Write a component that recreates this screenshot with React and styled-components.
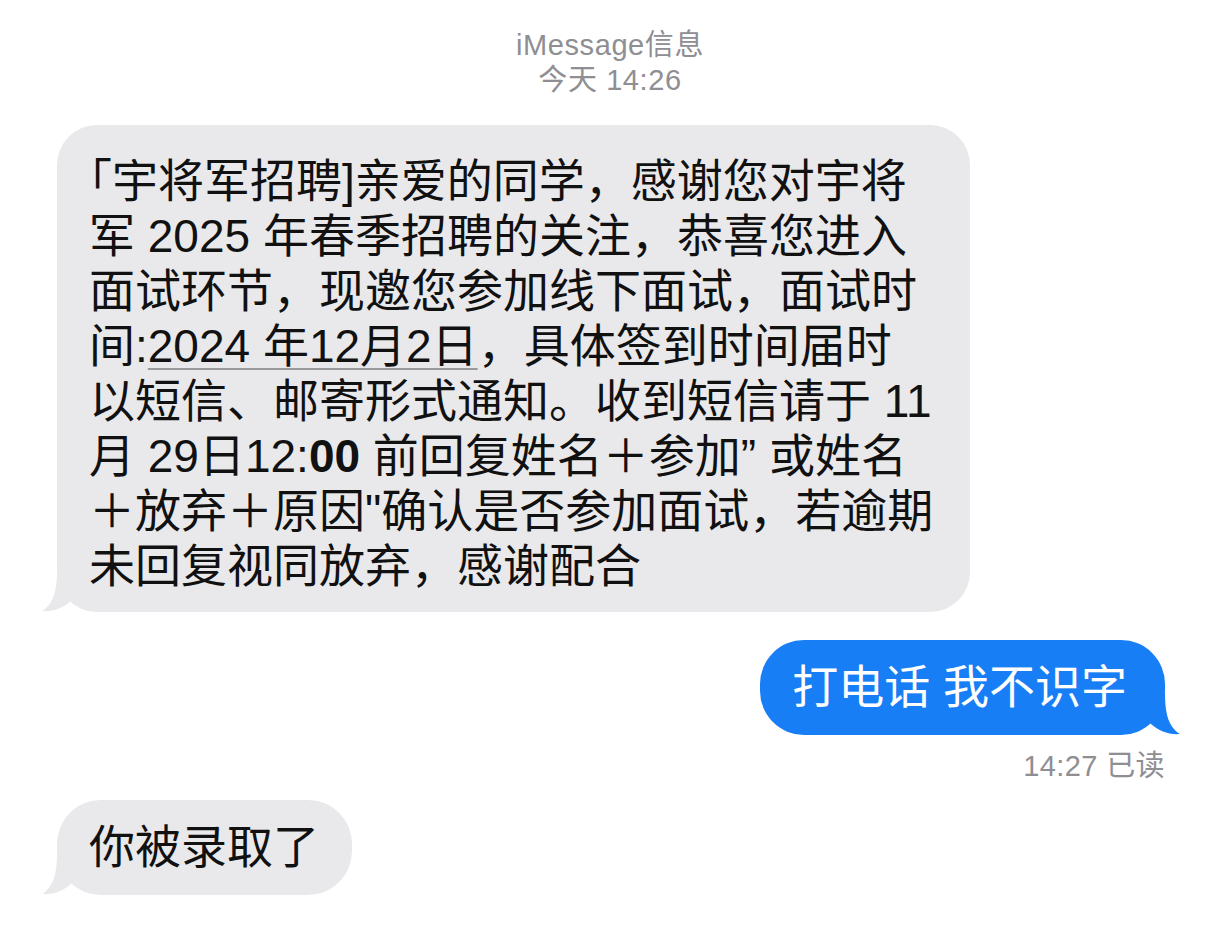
import React from 'react';
import styled, { createGlobalStyle } from 'styled-components';

const GlobalStyle = createGlobalStyle`
  body {
    margin: 0;
    background: #ffffff;
    font-family: "Liberation Sans", "Noto Sans CJK SC", sans-serif;
  }
`;

const Page = styled.div`
  display: flex;
  flex-direction: column;
  padding: 28px 51px 40px 57px;
`;

const Header = styled.div`
  align-self: center;
  text-align: center;
  color: #8e8e93;
  font-size: 29px;
  line-height: 35px;
  letter-spacing: 0.6px;
  margin-left: -2px;
`;

const Bubble = styled.div`
  position: relative;
  box-sizing: border-box;
  align-self: ${(p) => (p.$me ? 'flex-end' : 'flex-start')};
  background: ${(p) => (p.$me ? '#177ef5' : '#e9e9eb')};
  color: ${(p) => (p.$me ? '#ffffff' : '#111111')};
  border-radius: ${(p) => p.$radius || 44}px;
  font-size: 46px;
  line-height: 55px;
  margin-top: ${(p) => p.$top || 0}px;
  padding: ${(p) => p.$pad || '20px 33px 20px 32px'};
  width: ${(p) => (p.$width ? `${p.$width}px` : 'auto')};
`;

const Line = styled.span`
  display: block;
  white-space: nowrap;
`;

const Half = styled.span`
  font-family: "Noto Sans CJK SC", sans-serif;
  font-feature-settings: "halt";
`;

const Dated = styled.span`
  text-decoration: underline;
  text-decoration-color: #9a9a9e;
  text-decoration-thickness: 2px;
  text-underline-offset: 6px;
`;

const Heavy = styled.span`
  font-weight: 700;
`;

const Receipt = styled.div`
  align-self: flex-end;
  color: #8e8e93;
  font-size: 29px;
  line-height: 34px;
  letter-spacing: 0.4px;
  margin-top: 14px;
`;

const TailSvg = styled.svg`
  position: absolute;
  bottom: 0;
  width: 45px;
  height: 42px;
  ${(p) => (p.$me ? 'right: -16px; transform: scaleX(-1);' : 'left: -16px;')}
`;

function Tail({ me, color }) {
  return (
    <TailSvg $me={me} viewBox="0 0 45 42">
      <path
        d="M16 0 C16 22 12 34 1 41 C12 42 22 38 30 31 C34 28 38 20 40 10 L40 0 Z"
        fill={color}
      />
    </TailSvg>
  );
}

function App() {
  return (
    <>
      <GlobalStyle />
      <Page>
        <Header>
          <div>iMessage信息</div>
          <div>今天 14:26</div>
        </Header>

        <Bubble $top={27} $width={913} $radius={40} $pad="25px 20px 18px 32px">
          <Line>
            <Half>「</Half>宇将军招聘]亲爱的同学，感谢您对宇将
          </Line>
          <Line>军 2025 年春季招聘的关注，恭喜您进入</Line>
          <Line>面试环节，现邀您参加线下面试，面试时</Line>
          <Line>
            间:<Dated>2024 年12月2日</Dated>，具体签到时间届时
          </Line>
          <Line>以短信、邮寄形式通知。收到短信请于 11</Line>
          <Line>
            月 29日12:<Heavy>00</Heavy> 前回复姓名＋参加” 或姓名
          </Line>
          <Line>＋放弃＋原因"确认是否参加面试，若逾期</Line>
          <Line>未回复视同放弃，感谢配合</Line>
          <Tail color="#e9e9eb" />
        </Bubble>

        <Bubble $me $top={28} $pad="20px 38px 20px 32px">
          打电话 我不识字
          <Tail me color="#177ef5" />
        </Bubble>
        <Receipt>14:27 已读</Receipt>

        <Bubble $top={17}>
          你被录取了
          <Tail color="#e9e9eb" />
        </Bubble>
      </Page>
    </>
  );
}

export default App;
